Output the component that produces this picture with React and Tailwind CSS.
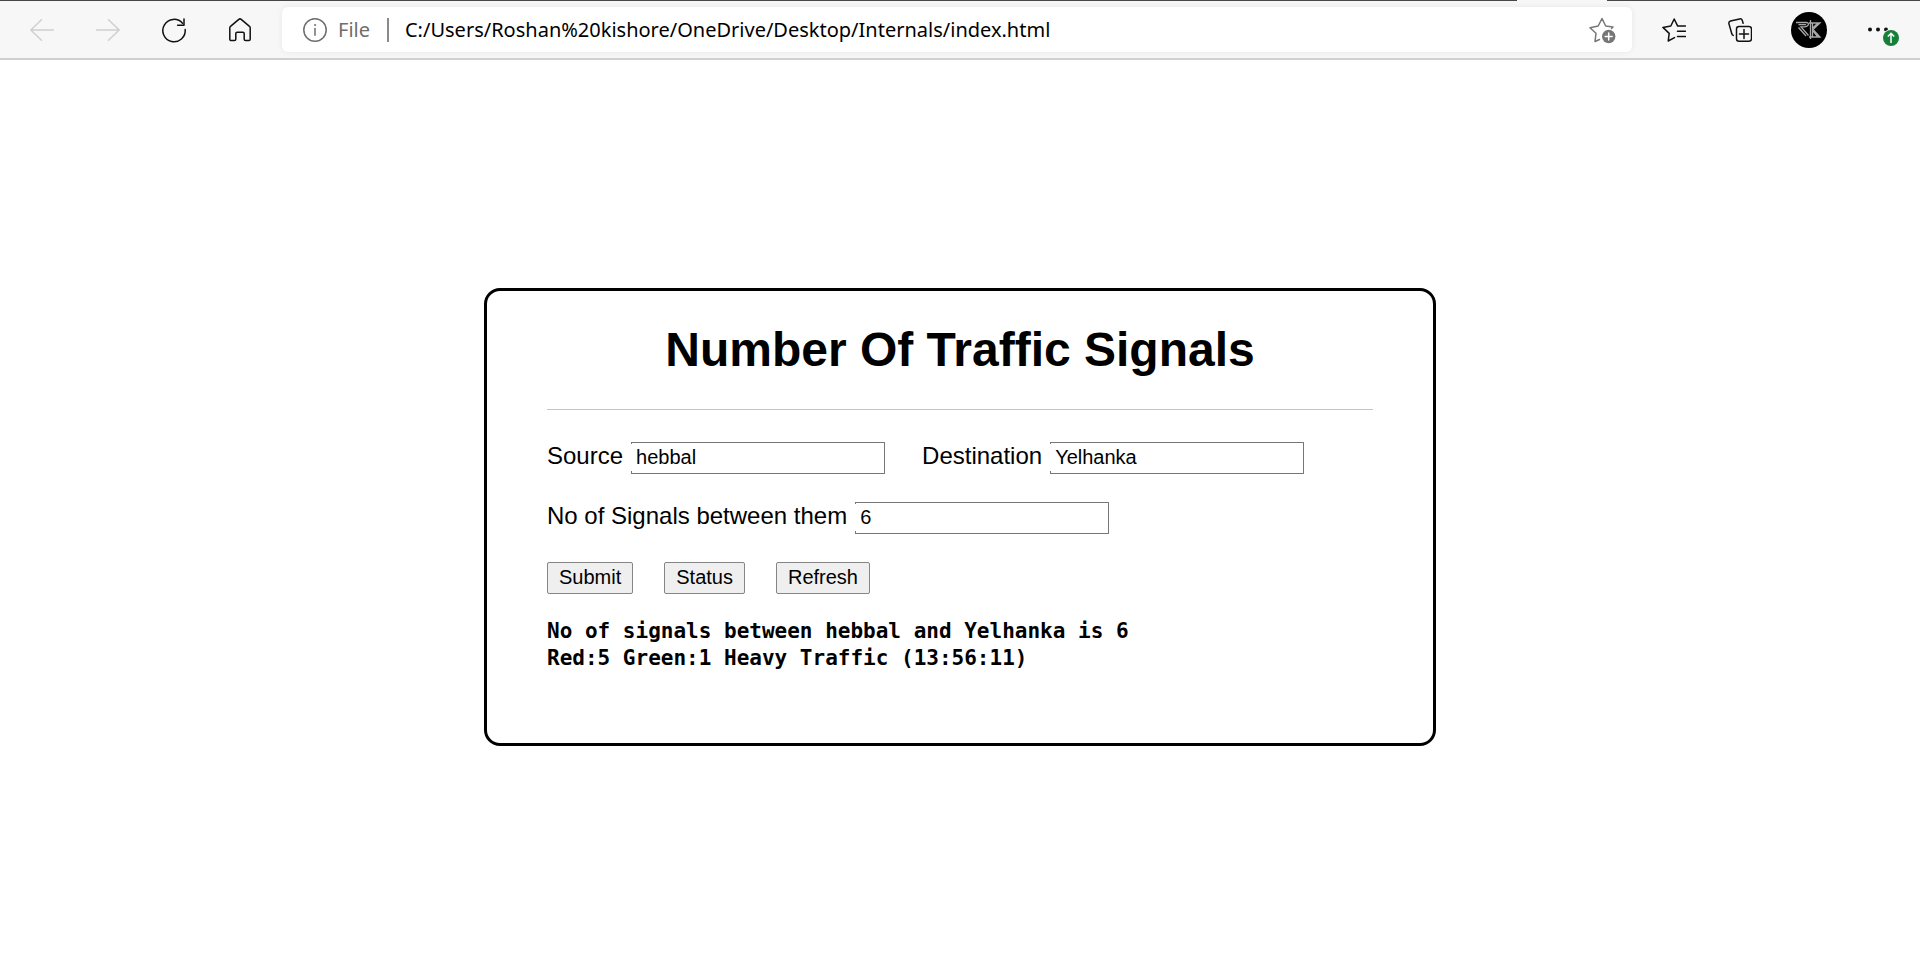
import { useState } from "react";

function Icon({ children, className = "" }) {
  return (
    <svg
      width="24"
      height="24"
      viewBox="0 0 24 24"
      fill="none"
      stroke="currentColor"
      strokeWidth="1.5"
      strokeLinecap="round"
      strokeLinejoin="round"
      aria-hidden="true"
      className={className}
    >
      {children}
    </svg>
  );
}

function ToolButton({ label, disabled, children }) {
  return (
    <button
      type="button"
      aria-label={label}
      disabled={disabled}
      className="flex h-12 w-[66px] shrink-0 items-center justify-center text-[#111111] disabled:text-[#cfcfcf]"
    >
      {children}
    </button>
  );
}

function Toolbar() {
  return (
    <header className="bg-[#f7f7f7]">
      <div className="flex h-px">
        <div className="flex-1 bg-[#4a4548]" />
        <div className="w-[90px]" />
        <div className="w-[313px] bg-[#4a4548]" />
      </div>
      <div className="flex h-[59px] items-center gap-[9px] border-b-2 border-[#d0d0d0] px-[9px]">
        <nav className="flex" aria-label="Navigation">
          <ToolButton label="Back" disabled>
            <Icon><path d="M23.5 12H.8M11.5 1.8.8 12l10.7 10.2" /></Icon>
          </ToolButton>
          <ToolButton label="Forward" disabled>
            <Icon><path d="M.5 12h22.7M12.500 1.800 23.200 12 12.500 22.200" /></Icon>
          </ToolButton>
          <ToolButton label="Reload">
            <Icon className="overflow-visible">
              <path d="M23.200 11.500A11.200 11.200 0 1 1 20.500 5.200" />
              <path d="M22 1v6.200h-6.400" />
            </Icon>
          </ToolButton>
          <ToolButton label="Home">
            <Icon>
              <path d="M1.800 9.800c0-.6.2-1 .7-1.400l8.300-7c.7-.6 1.700-.6 2.400 0l8.300 7c.5.4.7.8.7 1.400v11.400c0 .8-.6 1.400-1.400 1.400h-3.200c-.8 0-1.400-.6-1.400-1.400v-5.600c0-.8-.6-1.400-1.400-1.400H9.200c-.8 0-1.400.6-1.400 1.400v5.600c0 .8-.6 1.400-1.400 1.400H3.200c-.8 0-1.400-.6-1.400-1.400Z" />
            </Icon>
          </ToolButton>
        </nav>

        <div className="flex h-[45px] flex-1 items-center rounded-md bg-white pr-4 pl-[21px] font-['Noto_Sans',sans-serif] text-xl shadow-[0_0_6px_rgba(0,0,0,0.07)]">
          <Icon className="shrink-0 text-[#6e6e6e]">
            <circle cx="12" cy="12" r="11.200" />
            <path d="M12 10.500v6.800" />
            <circle cx="12" cy="7" r=".6" fill="currentColor" strokeWidth=".8" />
          </Icon>
          <span className="ml-[11px] text-[#6e6e6e]">File</span>
          <span className="ml-[17px] h-6 w-0.5 bg-[#8a8a8a]" />
          <input
            aria-label="Address"
            className="ml-4 min-w-0 flex-1 bg-transparent text-black outline-none"
            defaultValue="C:/Users/Roshan%20kishore/OneDrive/Desktop/Internals/index.html"
          />
          <button type="button" aria-label="Add this page to favorites" className="text-[#767676]">
            <svg width="28" height="28" viewBox="0 0 28 28" fill="none" stroke="currentColor" strokeWidth="1.5" strokeLinejoin="round" strokeLinecap="round">
              <path d="M11.500 23.500 7 25.500 8 17.300 2 11.800 10.200 10 14 2.500l3.700 7.500 7.300 1-1.500 1.500" />
              <circle cx="20.700" cy="20.500" r="6.700" fill="currentColor" stroke="none" />
              <path d="M20.700 17v7M17.200 20.500h7" stroke="white" />
            </svg>
          </button>
        </div>

        <div className="flex items-center">
          <ToolButton label="Favorites">
            <Icon>
              <path d="M12.500 19.600 6.200 23l1-7.600L.9 9.400 8.800 8 12.200 1l3.400 6.800M15.500 8H23.500M15.500 13.200h8M15.500 18.600h8" />
            </Icon>
          </ToolButton>
          <ToolButton label="Collections">
            <Icon>
              <rect x="8.500" y="8.500" width="15" height="14.700" rx="2.500" />
              <path d="M16 11.500v9M11.500 16h9M5.200 17.400c-.7-.3-1.200-.8-1.400-1.600L.9 5.600c-.2-1.200.4-2.300 1.600-2.600L11.600.9c1.300-.3 2.300.3 2.700 1.500l.8 2.800" />
            </Icon>
          </ToolButton>
          <button type="button" aria-label="Profile" className="mx-[3px] flex w-[66px] justify-center">
            <svg width="36" height="36" viewBox="0 0 36 36" fill="none" aria-hidden="true">
              <circle cx="18" cy="18" r="18" fill="black" />
              <g stroke="#a8a8a8" strokeWidth="1.300">
                <path d="M5 10.500h10.500c2 0 2.700 1.800 1 3.300-.8.700-2 1.100-3.500 1.100h-3l7.500 8.600" />
                <path d="M7.500 12.700h7.500M7.500 15.500l7.500 8.500" />
                <path d="M19.500 8v19M21.500 11v14" />
                <path d="M18 11h11l-7 6.500L29 25H18M27 11l-5 4.800M22 19l5 6" />
              </g>
            </svg>
          </button>
          <ToolButton label="Settings and more">
            <svg width="42" height="24" viewBox="0 0 42 24" className="overflow-visible" aria-hidden="true">
              <g fill="#111111">
                <circle cx="13" cy="11.500" r="2" />
                <circle cx="21" cy="11.500" r="2" />
                <circle cx="29" cy="11.500" r="2" />
              </g>
              <circle cx="34" cy="20" r="9" fill="#f7f7f7" />
              <circle cx="34" cy="20" r="8" fill="#178038" />
              <path d="M34 25v-9.500M30.800 18.500 34 15.300l3.200 3.200" fill="none" stroke="white" strokeWidth="1.500" />
            </svg>
          </ToolButton>
        </div>
      </div>
    </header>
  );
}

function Field({ id, label, value, onChange }) {
  return (
    <div className="flex items-center gap-2">
      <label htmlFor={id} className="pb-1 text-2xl leading-7">{label}</label>
      <input
        id={id}
        value={value}
        onChange={(e) => onChange(e.target.value)}
        className="h-8 w-[254px] rounded-r-[1px] border border-l-0 border-[#767676] bg-[linear-gradient(#767676_1px,transparent_1px,transparent_28px,#767676_28px)] bg-[length:1px_100%] bg-no-repeat px-[5px] pb-0.5 text-xl outline-none"
      />
    </div>
  );
}

function ActionButton({ children }) {
  return (
    <button type="button" className="h-8 rounded-[2px] border border-[#858585] bg-[#efefef] px-[11px] pb-0.5 text-xl leading-7">
      {children}
    </button>
  );
}

export default function App() {
  const [source, setSource] = useState("hebbal");
  const [destination, setDestination] = useState("Yelhanka");
  const [signals, setSignals] = useState("6");

  return (
    <div className="min-h-screen bg-white text-black">
      <Toolbar />
      <main className="flex justify-center pt-[228px] font-['Liberation_Sans',Arial,sans-serif]">
        <section className="w-full max-w-[952px] rounded-2xl border-3 border-black px-[60px] pt-[31px] pb-[71px]">
          <h1 className="text-center text-5xl leading-[56px] font-bold">Number Of Traffic Signals</h1>
          <hr className="mt-[31px] mb-8 border-[#c4c4c4]" />
          <form className="flex flex-col gap-7">
            <div className="flex flex-wrap gap-x-[37px] gap-y-7">
              <Field id="source" label="Source" value={source} onChange={setSource} />
              <Field id="destination" label="Destination" value={destination} onChange={setDestination} />
            </div>
            <Field id="signals" label="No of Signals between them" value={signals} onChange={setSignals} />
            <div className="flex gap-[31px]">
              <ActionButton>Submit</ActionButton>
              <ActionButton>Status</ActionButton>
              <ActionButton>Refresh</ActionButton>
            </div>
          </form>
          <output className="mt-6 block font-['DejaVu_Sans_Mono',monospace] text-[21px] leading-[27px] font-bold">
            No of signals between hebbal and Yelhanka is 6
            <br />
            Red:5 Green:1 Heavy Traffic (13:56:11)
          </output>
        </section>
      </main>
    </div>
  );
}
